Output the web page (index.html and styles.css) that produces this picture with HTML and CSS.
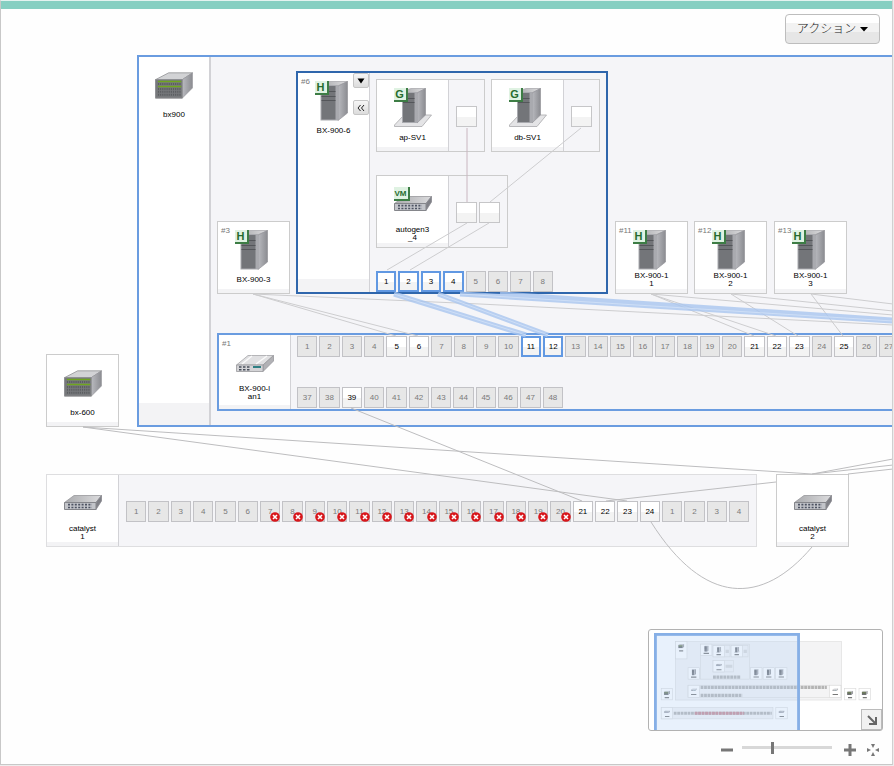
FILE: index.html
```html
<!DOCTYPE html>
<html lang="ja">

<head>
  <meta charset="UTF-8" />
  <meta name="viewport" content="width=device-width, initial-scale=1.0" />
  <title>Network Map</title>
  <link rel="stylesheet" href="styles.css">
</head>

<body>
  <!-- shared icons -->
  <svg class="defs" width="0" height="0" aria-hidden="true">
    <defs>
      <linearGradient id="gSide" x1="0" x2="1">
        <stop offset="0" stop-color="#b9babf" />
        <stop offset="1" stop-color="#8b8c91" />
      </linearGradient>
      <linearGradient id="gTop" x1="0" x2="1">
        <stop offset="0" stop-color="#a9aaad" />
        <stop offset="1" stop-color="#dcdcde" />
      </linearGradient>
      <symbol id="chassis" viewBox="0 0 39 27">
        <path d="M0.5 7.5L14 0.5H38.5L28 7.5Z" fill="#d2d3d5" stroke="#8e8f92" stroke-width=".8" />
        <path d="M28 7.5L38.5 0.5V16L28 26.5Z" fill="url(#gSide)" stroke="#96969b" stroke-width=".6" />
        <path d="M0.5 7.5H28V26.5H0.5Z" fill="#77797c" stroke="#8e8f92" />
        <path d="M3 12H27M3 17H27M3 20H27M3 23H27" stroke="#5b5d60" stroke-width="2" stroke-dasharray="1.2 1" />
        <path d="M3 9.5H27M3 14.5H27" stroke="#6fa51f" stroke-width="1.5" />
      </symbol>
      <symbol id="tower" viewBox="0 0 28 40">
        <path d="M0.5 3L9 0.5H27.5L18 5H0.5Z" fill="url(#gTop)" stroke="#a4a4a8" stroke-width=".7" />
        <path d="M18 5L27.5 0.5V32L18 39.5Z" fill="url(#gSide)" stroke="#94949a" stroke-width=".7" />
        <path d="M0.5 4H18V39.5H0.5Z" fill="#a9aaaf" />
        <path d="M1.5 5H15.5V38.5H1.5Z" fill="#737579" />
        <path d="M1.5 10.5H15.5M1.5 15.5H15.5M1.5 19.5H15.5" stroke="#54565a" />
      </symbol>
      <symbol id="server" viewBox="0 0 38 40">
        <path d="M0.5 37L10 27H37.5L28 38.5H0.5Z" fill="#e4e4e6" stroke="#a9a9ac" stroke-width=".8" />
        <path d="M8.5 3L17 0.5H31.5L23 5H8.5Z" fill="url(#gTop)" stroke="#a4a4a8" stroke-width=".7" />
        <path d="M23 5L31.5 0.5V27L23 35Z" fill="url(#gSide)" stroke="#94949a" stroke-width=".7" />
        <path d="M8 4H23V35H8Z" fill="#a9aaaf" />
        <path d="M9 5H20.5V34H9Z" fill="#737579" />
        <path d="M9 10.5H20.5M9 14.5H20.5" stroke="#54565a" />
      </symbol>
      <symbol id="switch" viewBox="0 0 38 16">
        <path d="M0.5 7.5L10 0.5H37.5L32 7.5Z" fill="url(#gTop)" stroke="#98989c" stroke-width=".8" />
        <path d="M32 7.5L37.5 0.5V6L32 14.5Z" fill="#808187" stroke="#8a8a90" stroke-width=".8" />
        <path d="M0.5 7.5H32V14.5H0.5Z" fill="#c3c5ca" stroke="#85868b" />
        <path d="M4 9.7H28M4 12.5H28" stroke="#4d5363" stroke-width="1.7" stroke-dasharray="2 1.4" />
      </symbol>
      <symbol id="lanblade" viewBox="0 0 38 18">
        <path d="M0.5 11L12 1.5H37.5L27 11Z" fill="#e0e0e2" stroke="#a6a6a9" stroke-width=".8" />
        <path d="M6 10L16 2M20 10L31 2" stroke="#fafafa" stroke-width="1.5" />
        <path d="M27 11L37.5 1.5V7L27 17.5Z" fill="#b1b1b5" stroke="#98989c" stroke-width=".8" />
        <path d="M0.5 11H27V17.5H0.5Z" fill="#d3d3d6" stroke="#98989c" stroke-width=".8" />
        <path d="M3 13H14.5M3 15.8H14.5" stroke="#4a505c" stroke-width="1.6" stroke-dasharray="2.5 1.5" />
        <path d="M17 13H25" stroke="#2e7f83" stroke-width="2" />
      </symbol>
      <symbol id="error" viewBox="0 0 10 10">
        <circle cx="5" cy="5" r="4.8" fill="#d8161b" />
        <path d="M3 3L7 7M7 3L3 7" stroke="#fff" stroke-width="1.6" />
      </symbol>
    </defs>
  </svg>

  <div class="window">
    <div class="topbar"></div>

    <main class="map">
      <section class="node frame chassis" id="bx900">
        <div class="card">
          <div class="icon"><svg width="39" height="27"><use href="#chassis" /></svg></div>
          <div class="label">bx900</div>
        </div>
      </section>

      <div class="node" id="bx600">
        <div class="card">
          <div class="icon"><svg width="39" height="27"><use href="#chassis" /></svg></div>
          <div class="label">bx-600</div>
        </div>
      </div>

      <div class="node" id="blade3">
        <div class="card">
          <span class="slot-no">#3</span>
          <div class="icon"><svg width="28" height="40"><use href="#tower" /></svg><span class="badge">H</span></div>
          <div class="label">BX-900-3</div>
        </div>
      </div>

      <section class="node frame selected" id="blade6">
        <div class="card">
          <span class="slot-no">#6</span>
          <div class="icon"><svg width="28" height="40"><use href="#tower" /></svg><span class="badge">H</span></div>
          <div class="label">BX-900-6</div>
          <div class="tools">
            <button type="button" aria-label="Menu"><svg width="8" height="6"><path d="M0.5 0.5H7.5L4 5.5Z" /></svg></button>
            <button type="button" aria-label="Collapse"><svg width="8" height="8" class="stroke"><path d="M3.5 1L1 4L3.5 7M7 1L4.5 4L7 7" /></svg></button>
          </div>
        </div>
        <div class="blade-body">
          <div class="guests">
            <div class="guest">
              <div class="card">
                <div class="icon"><svg width="38" height="40"><use href="#server" /></svg><span class="badge">G</span></div>
                <div class="label">ap-SV1</div>
              </div>
              <div class="nics"><i></i></div>
            </div>
            <div class="guest">
              <div class="card">
                <div class="icon"><svg width="38" height="40"><use href="#server" /></svg><span class="badge">G</span></div>
                <div class="label">db-SV1</div>
              </div>
              <div class="nics"><i></i></div>
            </div>
          </div>
          <div class="guests">
            <div class="guest">
              <div class="card">
                <div class="icon"><svg width="38" height="16"><use href="#switch" /></svg><span class="badge vm">VM</span></div>
                <div class="label">autogen3<br>_4</div>
              </div>
              <div class="nics"><i></i><i></i></div>
            </div>
          </div>
          <div class="ports eight" data-from="1" data-to="8" data-active="1,2,3,4"></div>
        </div>
      </section>

      <div class="node" id="blade11">
        <div class="card">
          <span class="slot-no">#11</span>
          <div class="icon"><svg width="28" height="40"><use href="#tower" /></svg><span class="badge">H</span></div>
          <div class="label">BX-900-1<br>1</div>
        </div>
      </div>

      <div class="node" id="blade12">
        <div class="card">
          <span class="slot-no">#12</span>
          <div class="icon"><svg width="28" height="40"><use href="#tower" /></svg><span class="badge">H</span></div>
          <div class="label">BX-900-1<br>2</div>
        </div>
      </div>

      <div class="node" id="blade13">
        <div class="card">
          <span class="slot-no">#13</span>
          <div class="icon"><svg width="28" height="40"><use href="#tower" /></svg><span class="badge">H</span></div>
          <div class="label">BX-900-1<br>3</div>
        </div>
      </div>

      <section class="node frame" id="lan1">
        <div class="card">
          <span class="slot-no">#1</span>
          <div class="icon"><svg width="38" height="18"><use href="#lanblade" /></svg></div>
          <div class="label">BX-900-l<br>an1</div>
        </div>
        <div class="lan-body">
          <div class="ports uplinks" data-from="1" data-to="27" data-linked="5,6,21,22,23,25" data-active="11,12"></div>
          <div class="ports twelve" data-from="37" data-to="48" data-linked="39"></div>
        </div>
      </section>

      <section class="node switch" id="catalyst1">
        <div class="card">
          <div class="icon"><svg width="38" height="16"><use href="#switch" /></svg></div>
          <div class="label">catalyst<br>1</div>
        </div>
        <div class="switch-body">
          <div class="ports twentyfour" data-from="1" data-to="24" data-linked="21,22,23,24" data-error="7-20"></div>
          <div class="ports four" data-from="1" data-to="4"></div>
        </div>
      </section>

      <div class="node" id="catalyst2">
        <div class="card">
          <div class="icon"><svg width="38" height="16"><use href="#switch" /></svg></div>
          <div class="label">catalyst<br>2</div>
        </div>
      </div>

      <!-- links between ports -->
      <svg class="links" width="1400" height="700" viewBox="1 9 1400 700">
        <g class="wire">
          <path d="M467 128V202" class="inner" />
          <path d="M581 128L490 202M467 223L387 270M489 223L410 270" />
          <path d="M253 294L396 336M253 294L418 336M253 294L480 304L893 325" />
          <path d="M651 294L754 336M651 294L776 336M651 294L893 315" />
          <path d="M731 294L798 336M731 294L893 311" />
          <path d="M811 294L843 336M811 294L893 304" />
        </g>
        <g class="wire dark">
          <path d="M83 427L812 474M83 427L627 501M351 408L582 501" />
          <path d="M606 501L776 482M812 474L893 459M812 474L893 465M848 474L893 469" />
          <path d="M651 522C704 606 762 606 812 547" />
        </g>
        <g class="wire active">
          <path d="M394 294L526 335M438 294L548 335M460 294L893 321M500 294L893 320" />
        </g>
        <g class="wire active core">
          <path d="M394 294L526 335M438 294L548 335M460 294L893 321" />
        </g>
      </svg>

      <button type="button" class="action">アクション<svg width="8" height="5"><path d="M0 0H8L4 4.5Z" /></svg></button>

      <aside class="navigator">
        <div class="minimap">
          <svg class="overview" viewBox="0 0 1458 618" preserveAspectRatio="xMinYMin slice">
            <g class="area">
              <rect x="137" y="55" width="1058" height="372" />
              <rect x="296" y="71" width="312" height="223" />
              <rect x="376" y="79" width="108" height="73" />
              <rect x="491" y="79" width="108" height="73" />
              <rect x="376" y="175" width="131" height="73" />
              <rect x="217" y="333" width="974" height="78" />
              <rect x="46" y="474" width="712" height="73" />
            </g>
            <g class="box">
              <rect x="137" y="55" width="73" height="110" />
              <rect x="46" y="353" width="73" height="73" />
              <rect x="217" y="221" width="73" height="73" />
              <rect x="296" y="71" width="73" height="73" />
              <rect x="376" y="79" width="73" height="73" />
              <rect x="491" y="79" width="73" height="73" />
              <rect x="376" y="175" width="73" height="73" />
              <rect x="615" y="221" width="73" height="73" />
              <rect x="695" y="221" width="73" height="73" />
              <rect x="774" y="221" width="73" height="73" />
              <rect x="217" y="333" width="73" height="78" />
              <rect x="1118" y="333" width="73" height="78" />
              <rect x="1213" y="353" width="73" height="73" />
              <rect x="1306" y="353" width="73" height="73" />
              <rect x="46" y="474" width="73" height="73" />
              <rect x="776" y="474" width="73" height="73" />
            </g>
            <use href="#chassis" x="154" y="70" width="39" height="27" />
            <use href="#chassis" x="63" y="368" width="39" height="27" />
            <use href="#chassis" x="1230" y="368" width="39" height="27" />
            <use href="#chassis" x="1323" y="368" width="39" height="27" />
            <use href="#tower" x="240" y="230" width="28" height="40" />
            <use href="#tower" x="320" y="80" width="28" height="40" />
            <use href="#server" x="394" y="88" width="38" height="40" />
            <use href="#server" x="509" y="88" width="38" height="40" />
            <use href="#switch" x="394" y="196" width="38" height="16" />
            <use href="#tower" x="638" y="230" width="28" height="40" />
            <use href="#tower" x="718" y="230" width="28" height="40" />
            <use href="#tower" x="797" y="230" width="28" height="40" />
            <use href="#lanblade" x="235" y="352" width="38" height="18" />
            <use href="#lanblade" x="1136" y="352" width="38" height="18" />
            <use href="#switch" x="63" y="494" width="38" height="16" />
            <use href="#switch" x="793" y="494" width="38" height="16" />
            <path class="names" d="M160 114H186M68 412H96M236 281H270M316 130H350M398 138H426M513 138H541M398 234H430M634 280H668M714 280H748M794 280H828M236 392H270M1138 392H1172M1236 412H1262M1330 412H1356M70 532H98M800 532H828" />
            <path class="row" d="M376 281H553M297 346H1101M297 397H562M126 511H750" />
            <path class="row fail" d="M260 511H574" />
            <path class="nic" d="M456 117H477M571 117H592M456 212H499" />
            <rect class="view" x="9" y="9" width="912" height="700" />
          </svg>
          <button type="button" class="fold" aria-label="Hide overview"><svg width="12" height="12"><path d="M2 2L10 10M10 3V10H3" /></svg></button>
        </div>
        <div class="zoom">
          <button type="button" aria-label="Zoom out"><svg width="12" height="12"><path d="M0 6H12" /></svg></button>
          <input type="range" min="0" max="100" value="33" aria-label="Zoom">
          <button type="button" aria-label="Zoom in"><svg width="12" height="12"><path d="M0 6H12M6 0V12" /></svg></button>
          <button type="button" aria-label="Fit"><svg width="12" height="12" class="fill"><path d="M4 0H8L6 4ZM4 12H8L6 8ZM0 4V8L4 6ZM12 4V8L8 6Z" /></svg></button>
        </div>
      </aside>
    </main>
  </div>

  <script>
    // "1,2,7-20" -> [1, 2, 7, ...]
    function parseList(text) {
      const list = [];
      (text || "").split(",").filter(Boolean).forEach((part) => {
        const [a, b] = part.split("-").map(Number);
        for (let n = a; n <= (b || a); n++) list.push(n);
      });
      return list;
    }

    document.querySelectorAll(".ports").forEach((row) => {
      const linked = parseList(row.dataset.linked);
      const active = parseList(row.dataset.active);
      const errors = parseList(row.dataset.error);
      for (let n = Number(row.dataset.from); n <= Number(row.dataset.to); n++) {
        const port = document.createElement("span");
        port.className = "port";
        port.textContent = n;
        if (linked.includes(n)) port.classList.add("linked");
        if (active.includes(n)) port.classList.add("active");
        if (errors.includes(n)) {
          port.insertAdjacentHTML("beforeend", '<svg width="10" height="10"><use href="#error" /></svg>');
        }
        row.appendChild(port);
      }
    });
  </script>
</body>

</html>
```
FILE: styles.css
```css
* {
  box-sizing: border-box;
}

body {
  margin: 0;
  padding: 0 1px 1px 0;
  font-family: "Liberation Sans", Arial, "Noto Sans CJK JP", sans-serif;
  font-size: 8px;
  line-height: 8px;
  color: #000;
  background: #ededed;
}

button {
  font: inherit;
  color: inherit;
  padding: 0;
  cursor: pointer;
}

.defs {
  position: absolute;
}

.window {
  display: flex;
  flex-direction: column;
  height: calc(100vh - 1px);
  border: 1px solid #c8c8c8;
  border-right-color: #d0d0d0;
  border-top-color: #e4f3f0;
  background: #fefefe;
}

.topbar {
  height: 8px;
  background: #87cfc2;
}

.map {
  position: relative;
  flex: 1;
  overflow: hidden;
}

/* nodes */
.node {
  position: absolute;
  display: flex;
  min-width: 73px;
  min-height: 73px;
  border: 1px solid #ccc;
  background: #f5f5f8;
}

.frame {
  border: 2px solid #6a9ce0;
}

.frame.selected {
  border-color: #2f66ac;
}

.switch {
  border-color: #dedee0;
}

#bx900 { left: 136px; top: 46px; width: 1058px; height: 372px; }
#bx600 { left: 45px; top: 345px; }
#blade3 { left: 216px; top: 212px; }
#blade6 { left: 295px; top: 62px; width: 312px; height: 223px; }
#blade11 { left: 614px; top: 212px; }
#blade12 { left: 693px; top: 212px; }
#blade13 { left: 773px; top: 212px; }
#lan1 { left: 216px; top: 324px; width: 974px; height: 78px; }
#catalyst1 { left: 45px; top: 465px; }
#catalyst2 { left: 775px; top: 465px; }

.card {
  position: relative;
  flex: none;
  display: flex;
  flex-direction: column;
  align-items: center;
  width: 71px;
  padding-top: 8px;
  background: linear-gradient(#fff 94%, #f3f3f5 94%);
}

.frame > .card,
.switch > .card,
.guest > .card {
  width: 72px;
  border-right: 1px solid #d2d2d6;
}

.chassis > .card {
  border-right-width: 2px;
}

.icon {
  position: relative;
  display: flex;
  align-items: center;
  justify-content: center;
  width: 38px;
  height: 40px;
}

.badge {
  position: absolute;
  left: 0;
  top: 0;
  width: 14px;
  height: 14px;
  border: solid #3d7d45;
  border-width: 0 2px 2px 0;
  background: #dff2e2;
  color: #256b2e;
  font-size: 11px;
  line-height: 13px;
  font-weight: bold;
  text-align: center;
}

.badge.vm {
  top: 3px;
  width: 16px;
  font-size: 8px;
}

.label {
  display: flex;
  flex-direction: column;
  justify-content: center;
  height: 16px;
  margin-top: 2px;
  text-align: center;
}

.slot-no {
  position: absolute;
  left: 3px;
  top: 5px;
  color: #777;
}

.tools {
  position: absolute;
  right: 0;
  top: 0;
  display: flex;
  flex-direction: column;
  gap: 12px;
}

.tools button {
  display: flex;
  align-items: center;
  justify-content: center;
  width: 16px;
  height: 15px;
  border: 1px solid #c6c6c6;
  border-radius: 2px;
  background: linear-gradient(#f6f6f6, #dcdcdc);
}

.stroke {
  fill: none;
  stroke: #222;
}

.blade-body {
  display: flex;
  flex-direction: column;
  align-items: flex-start;
  gap: 23px;
  padding: 6px;
}

.guests {
  display: flex;
  gap: 6px;
}

.guest {
  display: flex;
  height: 73px;
  border: 1px solid #ccc;
}

.nics {
  display: flex;
  align-items: center;
  gap: 2px;
  padding: 2px 7px 0;
}

.nics i {
  width: 21px;
  height: 21px;
  border: 1px solid #c6c6c8;
  background: linear-gradient(#fff 55%, #f3f3f3 55%);
}

/* ports */
.ports {
  display: grid;
  grid-auto-flow: column;
  grid-auto-columns: 1fr;
  gap: 2px;
}

.four { width: 87px; }
.eight { width: 177px; }
.twelve { width: 266px; }
.twentyfour { width: 534px; }
.uplinks { width: 602px; }

.port {
  position: relative;
  display: flex;
  align-items: center;
  justify-content: center;
  height: 21px;
  border: 1px solid #c2c2c6;
  background: #e7e7e7;
  color: #7a7a7a;
}

.port.linked,
.port.active {
  background: linear-gradient(#fff 55%, #f3f3f3 55%);
  color: #000;
}

.port.active {
  border: 2px solid #6198e2;
}

.port svg {
  position: absolute;
  right: -1px;
  bottom: -1px;
}

.lan-body {
  display: flex;
  flex-direction: column;
  gap: 30px;
  padding: 1px 6px;
}

.switch-body {
  display: flex;
  align-items: center;
  gap: 2px;
  padding: 2px 7px 0;
}

/* links */
.links {
  position: absolute;
  left: 0;
  top: 0;
  pointer-events: none;
}

.wire {
  fill: none;
  stroke: #cdcdcf;
}

.wire .inner {
  stroke: #c9b6c0;
}

.wire.dark {
  stroke: #bdbdbf;
}

.wire.active {
  stroke: #a9c6ef;
  stroke-width: 5px;
  opacity: .8;
}

.wire.core {
  stroke: #d3e2f8;
  stroke-width: 1px;
}

.action {
  position: absolute;
  right: 12px;
  top: 5px;
  display: flex;
  align-items: center;
  justify-content: center;
  gap: 4px;
  width: 95px;
  height: 30px;
  border: 1px solid #bdbdbd;
  border-radius: 4px;
  background: linear-gradient(#fff 28%, #f2f2f2 28%, #f2f2f2 60%, #e6e6e6 60%);
  color: #222;
  font-size: 12px;
  font-weight: 300;
}

/* overview + zoom */
.navigator {
  position: absolute;
  right: 9px;
  bottom: 5px;
  display: flex;
  flex-direction: column;
  align-items: flex-end;
  gap: 10px;
}

.minimap {
  position: relative;
  width: 235px;
  height: 102px;
  padding: 3px 0 0 5px;
  border: 1px solid #b2b2b2;
  border-radius: 3px;
  background: #fff;
}

.overview {
  display: block;
  width: 228px;
  height: 97px;
}

.area rect {
  fill: #f4f4f5;
  stroke: #dcdcdc;
  stroke-width: 4px;
}

.box rect {
  fill: #fff;
  stroke: #dadada;
  stroke-width: 4px;
}

.names {
  stroke: #777;
  stroke-width: 7px;
}

.row {
  stroke: #b4b4b4;
  stroke-width: 20px;
  stroke-dasharray: 18 4;
}

.row.fail {
  stroke: #c78a94;
}

.nic {
  stroke: #d8d8d8;
  stroke-width: 20px;
}

.view {
  fill: rgba(180, 208, 245, .3);
  stroke: #86afe6;
  stroke-width: 18px;
}

.fold {
  position: absolute;
  right: 0;
  bottom: 0;
  display: flex;
  align-items: center;
  justify-content: center;
  width: 21px;
  height: 21px;
  border: 1px solid #bbb;
  background: #f1f1f1;
}

.fold path {
  fill: none;
  stroke: #666;
  stroke-width: 2px;
}

.zoom {
  display: flex;
  align-items: center;
  padding-right: 4px;
  height: 18px;
}

.zoom button {
  display: flex;
  border: 0;
  background: none;
}

.zoom button + button {
  margin-left: 11px;
}

.zoom path {
  stroke: #777;
  stroke-width: 3px;
}

.zoom .fill path {
  fill: #777;
  stroke: none;
}

.zoom input {
  appearance: none;
  width: 90px;
  height: 12px;
  margin: 0 12px 5px 9px;
  background: linear-gradient(#d8d8d8, #d8d8d8) center / 100% 3px no-repeat;
}

.zoom input::-webkit-slider-thumb {
  appearance: none;
  width: 3px;
  height: 12px;
  background: #777;
}
```
